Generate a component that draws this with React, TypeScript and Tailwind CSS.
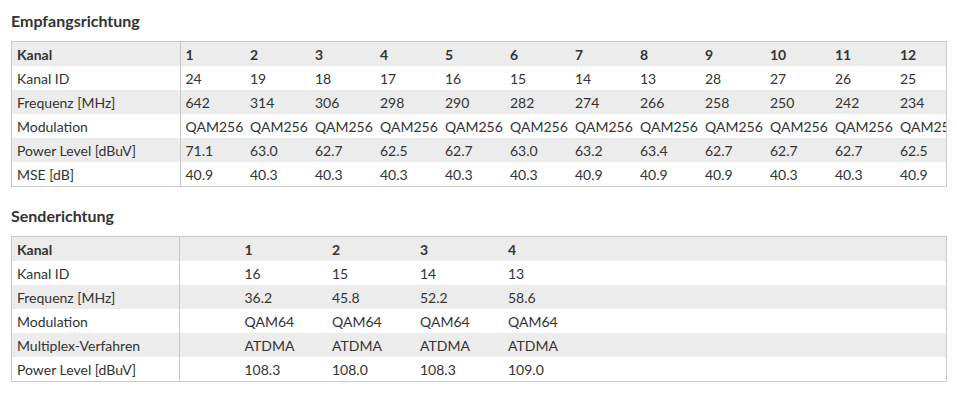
import React from "react";

const rx = {
  head: ["Kanal", "1", "2", "3", "4", "5", "6", "7", "8", "9", "10", "11", "12"],
  rows: [
    ["Kanal ID", "24", "19", "18", "17", "16", "15", "14", "13", "28", "27", "26", "25"],
    ["Frequenz [MHz]", "642", "314", "306", "298", "290", "282", "274", "266", "258", "250", "242", "234"],
    ["Modulation", ...Array(12).fill("QAM256")],
    ["Power Level [dBuV]", "71.1", "63.0", "62.7", "62.5", "62.7", "63.0", "63.2", "63.4", "62.7", "62.7", "62.7", "62.5"],
    ["MSE [dB]", "40.9", "40.3", "40.3", "40.3", "40.3", "40.3", "40.9", "40.9", "40.9", "40.3", "40.3", "40.9"],
  ],
};

const tx = {
  head: ["Kanal", "1", "2", "3", "4"],
  rows: [
    ["Kanal ID", "16", "15", "14", "13"],
    ["Frequenz [MHz]", "36.2", "45.8", "52.2", "58.6"],
    ["Modulation", "QAM64", "QAM64", "QAM64", "QAM64"],
    ["Multiplex-Verfahren", "ATDMA", "ATDMA", "ATDMA", "ATDMA"],
    ["Power Level [dBuV]", "108.3", "108.0", "108.3", "109.0"],
  ],
};

const rowBg = (i: number) => (i % 2 === 0 ? "bg-[#ececec]" : "bg-white");

function Empfang() {
  return (
    <div className="w-[936px] overflow-hidden border border-[#c9c9c9]">
      <table className="w-[948px] table-fixed border-collapse">
        <colgroup>
          <col className="w-[168px]" />
          {rx.head.slice(1).map((h) => (
            <col key={h} className="w-[65px]" />
          ))}
        </colgroup>
        <tbody>
          {[rx.head, ...rx.rows].map((row, i) => (
            <tr key={i} className={`h-6 ${rowBg(i)} ${i === 0 ? "font-bold" : ""}`}>
              {row.map((c, j) => (
                <td
                  key={j}
                  className={`whitespace-nowrap overflow-visible px-[5px] py-0 ${j === 0 ? "border-r border-[#c9c9c9]" : ""}`}
                >
                  {c}
                </td>
              ))}
            </tr>
          ))}
        </tbody>
      </table>
    </div>
  );
}

function Sende() {
  return (
    <div className="w-[936px] border border-[#c9c9c9]">
      <table className="w-full table-fixed border-collapse">
        <colgroup>
          <col className="w-[167px]" />
          <col className="w-[148px]" />
          <col className="w-[88px]" />
          <col className="w-[88px]" />
          <col />
        </colgroup>
        <tbody>
          {[tx.head, ...tx.rows].map((row, i) => (
            <tr key={i} className={`h-6 ${rowBg(i)} ${i === 0 ? "font-bold" : ""}`}>
              {row.map((c, j) => (
                <td
                  key={j}
                  className={`whitespace-nowrap py-0 ${j === 0 ? "border-r border-[#c9c9c9] px-[5px]" : j === 1 ? "pl-[65px]" : "px-[5px]"}`}
                >
                  {c}
                </td>
              ))}
            </tr>
          ))}
        </tbody>
      </table>
    </div>
  );
}

export default function App() {
  return (
    <div className="min-h-[405px] w-[957px] bg-white pl-[11px] pt-[10px] font-['Lato','Open_Sans',sans-serif] text-[14px] text-[#333]">
      <h3 className="mb-[9px] text-[16px] font-bold leading-[22px]">Empfangsrichtung</h3>
      <Empfang />
      <h3 className="mb-[9px] mt-[18px] text-[16px] font-bold leading-[22px]">Senderichtung</h3>
      <Sende />
    </div>
  );
}
